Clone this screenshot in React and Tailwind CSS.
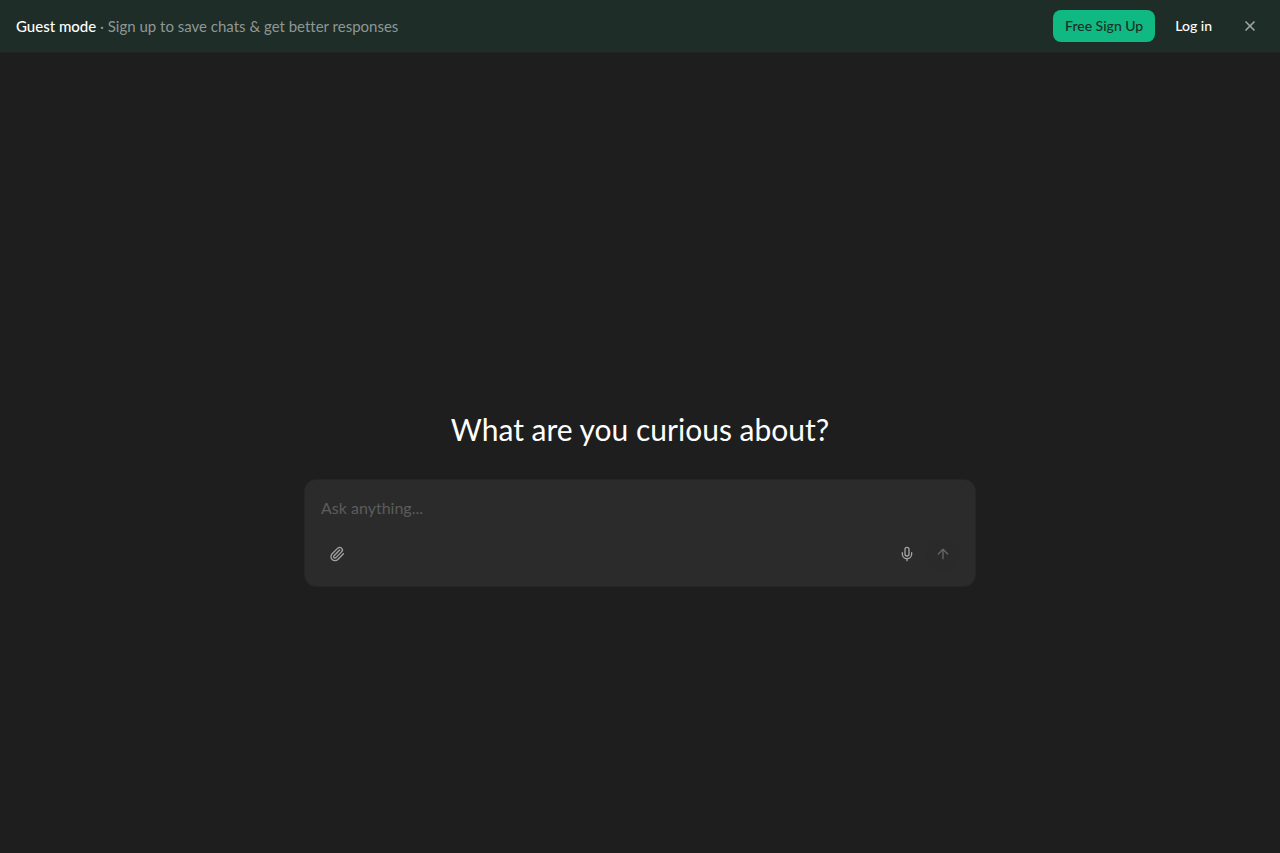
import React, { useState } from 'react';
import { ArrowUp, Mic, Paperclip, X } from 'lucide-react';

const GuestBanner = ({ onClose }) => {
  return (
    <header className="flex items-center justify-between gap-4 border-b border-[#1f2422] bg-[#1e2d28] px-4 py-2.5">
      <p className="text-[15px] text-[#8f9794]">
        <span className="font-medium text-white">Guest mode</span>
        {' · Sign up to save chats & get better responses'}
      </p>
      <div className="flex items-center gap-2 text-sm">
        <button type="button" className="h-8 rounded-lg bg-[#10b981] px-3 font-medium text-[#1e2d28]">
          Free Sign Up
        </button>
        <a href="#login" className="flex h-8 items-center px-3 font-medium text-white">
          Log in
        </a>
        <button
          type="button"
          aria-label="Close banner"
          onClick={onClose}
          className="ml-1 flex size-7 items-center justify-center text-[#a0a6a4]"
        >
          <X size={16} strokeWidth={2.5} />
        </button>
      </div>
    </header>
  );
};

const Composer = () => {
  const [message, setMessage] = useState('');

  return (
    <form
      onSubmit={(e) => e.preventDefault()}
      className="w-full max-w-2xl rounded-xl border border-[#252525] bg-[#2b2b2b] p-4"
    >
      <textarea
        rows={1}
        aria-label="Message"
        placeholder="Ask anything..."
        value={message}
        onChange={(e) => setMessage(e.target.value)}
        className="block h-6 w-full resize-none text-base text-white outline-none placeholder:text-[#5c5c5c]"
      />
      <div className="mt-[18px] flex items-center justify-between">
        <button type="button" aria-label="Attach file" className="flex size-8 items-center justify-center text-[#a3a3a3]">
          <Paperclip size={16} strokeWidth={2} />
        </button>
        <div className="flex items-center gap-1">
          <button type="button" aria-label="Voice input" className="flex size-8 items-center justify-center text-[#a3a3a3]">
            <Mic size={16} strokeWidth={2} />
          </button>
          <button
            type="submit"
            aria-label="Send"
            disabled={!message}
            className="flex size-8 items-center justify-center rounded-full bg-[#2a2a2a] text-[#666666]"
          >
            <ArrowUp size={16} strokeWidth={2} />
          </button>
        </div>
      </div>
    </form>
  );
};

const App = () => {
  const [showBanner, setShowBanner] = useState(true);

  return (
    <div className="flex min-h-screen flex-col bg-[#1e1e1e] font-['Lato','Liberation_Sans',sans-serif] [font-variant-ligatures:none]">
      {showBanner && <GuestBanner onClose={() => setShowBanner(false)} />}
      <main className="flex flex-1 flex-col items-center justify-center gap-[30px] px-4 pt-[90px]">
        <h1 className="text-center text-3xl leading-10 font-normal text-white">What are you curious about?</h1>
        <Composer />
      </main>
    </div>
  );
};

export default App;
